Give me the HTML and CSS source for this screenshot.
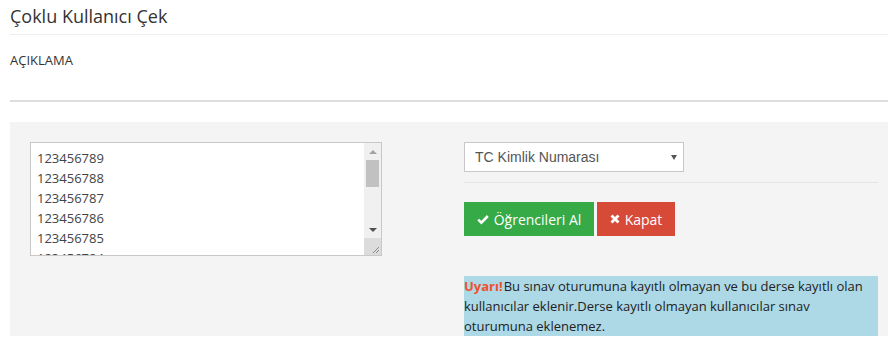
FILE: index.html
```html
<!DOCTYPE html>
<html lang="tr">
  <head>
    <meta charset="UTF-8">
    <title>Çoklu Kullanıcı Çek</title>
    <link rel="stylesheet" href="styles.css">
  </head>
  <body>
    <div class="page">
      <h4 class="title">Çoklu Kullanıcı Çek</h4>
      <div class="desc">AÇIKLAMA</div>

      <div class="panel">
        <div class="list-box">
          <textarea class="list" spellcheck="false">123456789
123456788
123456787
123456786
123456785
123456784
123456783</textarea>
          <div class="scroll">
            <div class="scroll-btn"><span class="arrow-up"></span></div>
            <div class="scroll-thumb"></div>
            <div class="scroll-track"></div>
            <div class="scroll-btn"><span class="arrow-down"></span></div>
            <div class="scroll-corner">
              <svg width="17" height="17" viewBox="0 0 17 17">
                <path d="M15 9 L9 15 M15 12 L12 15" stroke="#8a8a8a" stroke-width="1"/>
              </svg>
            </div>
          </div>
        </div>

        <div class="side">
          <div class="select-wrap">
            <select class="field">
              <option>TC Kimlik Numarası</option>
              <option>Kullanıcı Adı</option>
              <option>E-posta</option>
            </select>
          </div>
          <div class="sep"></div>
          <div class="actions">
            <button class="btn green">
              <svg class="ico" width="12" height="11" viewBox="0 0 12 11">
                <path d="M1.2 5.6 L4.4 8.6 L10.8 2" fill="none" stroke="#fff" stroke-width="2.6"/>
              </svg>
              <span>Öğrencileri Al</span>
            </button>
            <button class="btn red">
              <svg class="ico" width="10" height="10" viewBox="0 0 10 10">
                <path d="M1.5 1.5 L8.5 8.5 M8.5 1.5 L1.5 8.5" stroke="#fff" stroke-width="2.8"/>
              </svg>
              <span>Kapat</span>
            </button>
          </div>
          <div class="note"><span class="warn">Uyarı!</span>Bu sınav oturumuna kayıtlı olmayan ve bu derse kayıtlı olan kullanıcılar eklenir.Derse kayıtlı olmayan kullanıcılar sınav oturumuna eklenemez.</div>
        </div>
      </div>
    </div>
  </body>
</html>
```

FILE: styles.css
```css
body {
  margin: 0;
  background: #fff;
}

.page {
  padding-left: 10px;
  font-family: "Open Sans", sans-serif;
  color: #333;
}

.title {
  margin: 0;
  padding: 4px 0 6px;
  font-size: 18px;
  font-weight: 400;
  line-height: 24px;
  border-bottom: 1px solid #eee;
}

.desc {
  padding: 15px 0 30px;
  font-size: 13px;
  line-height: 20px;
  border-bottom: 2px solid #ddd;
}

.panel {
  margin-top: 20px;
  padding: 20px 10px 0 20px;
  background: #f4f4f4;
  display: grid;
  grid-template-columns: 352px 1fr;
  column-gap: 82px;
  align-items: start;
}

.list-box {
  display: flex;
  height: 114px;
  box-sizing: border-box;
  border: 1px solid #c8c8c8;
  background: #fff;
}

.list {
  flex: 1;
  margin: 0;
  border: 0;
  padding: 5px 6px;
  font-family: "Open Sans", sans-serif;
  font-size: 13px;
  line-height: 20px;
  color: #444;
  resize: none;
  overflow: hidden;
  outline: none;
}

.scroll {
  width: 17px;
  display: flex;
  flex-direction: column;
  background: #f0f0f0;
}

.scroll-btn {
  height: 17px;
  display: flex;
  align-items: center;
  justify-content: center;
}

.arrow-up {
  border-left: 4px solid transparent;
  border-right: 4px solid transparent;
  border-bottom: 4px solid #a3a3a3;
}

.arrow-down {
  border-left: 4px solid transparent;
  border-right: 4px solid transparent;
  border-top: 4px solid #505050;
}

.scroll-thumb {
  height: 27px;
  margin: 0 2px;
  background: #c1c1c1;
}

.scroll-track {
  flex: 1;
}

.scroll-corner {
  height: 17px;
  background: #dcdcdc;
}

.scroll-corner svg {
  display: block;
}

.select-wrap {
  position: relative;
  width: 220px;
}

.select-wrap::after {
  content: "";
  position: absolute;
  right: 7px;
  top: 13px;
  border-left: 3px solid transparent;
  border-right: 3px solid transparent;
  border-top: 5px solid #555;
  pointer-events: none;
}

.field {
  display: block;
  width: 100%;
  height: 30px;
  padding: 0 10px;
  border: 1px solid #c8c8c8;
  border-radius: 0;
  background: #fff;
  font-family: "Liberation Sans", Arial, sans-serif;
  font-size: 14px;
  color: #555;
  -webkit-appearance: none;
  appearance: none;
}

.sep {
  margin-top: 10px;
  border-top: 1px solid #e5e5e5;
}

.actions {
  margin-top: 19px;
  display: flex;
  gap: 3px;
}

.btn {
  height: 34px;
  padding: 0;
  border: 0;
  border-radius: 0;
  font-family: "Open Sans", sans-serif;
  font-size: 14px;
  color: #fff;
  white-space: nowrap;
  display: flex;
  align-items: center;
  justify-content: center;
  gap: 5px;
}

.green {
  width: 130px;
  background: #35aa47;
}

.red {
  width: 78px;
  background: #d84a38;
}

.note {
  margin-top: 40px;
  background: #add8e6;
  font-size: 13px;
  line-height: 20px;
  color: #222;
}

.warn {
  margin-right: 1px;
  font-weight: 700;
  color: #f0502d;
}
```
